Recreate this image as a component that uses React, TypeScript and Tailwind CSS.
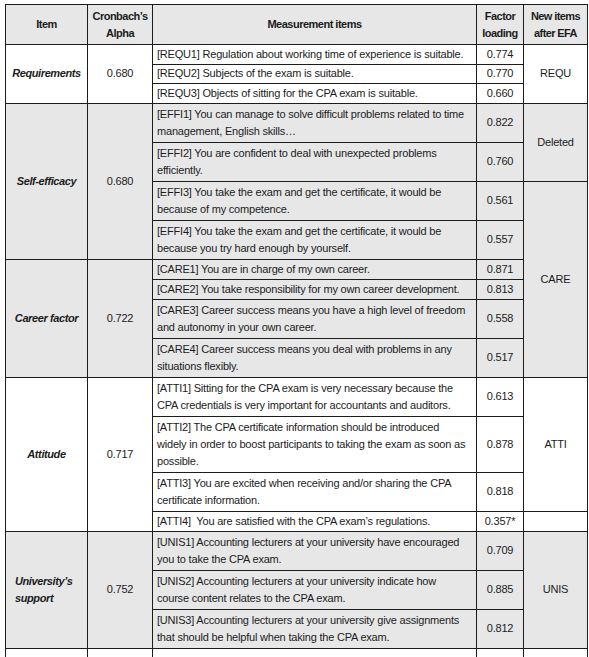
import React from "react";

const GRAY = "bg-[#e7e7e8]";
const td = "border border-[#1c1c1c] align-middle";
const meas = `${td} px-[4px] text-left whitespace-nowrap`;
const num = `${td} text-center`;
const lbl = `${td} text-center font-bold italic tracking-[-0.4px]`;

type Row = {
  h: string;
  text: React.ReactNode;
  f: string;
};

function M({ lines }: { lines: string[] }) {
  return (
    <>
      {lines.map((l, i) => (
        <React.Fragment key={i}>
          {i > 0 && <br />}
          {l}
        </React.Fragment>
      ))}
    </>
  );
}

export default function App() {
  return (
    <div className="w-[589px] h-[657px] overflow-hidden bg-white pt-[4px] pl-[5px]">
      <table
        className="w-[582px] table-fixed border-collapse text-[11px] leading-[17px] text-[#1c1c1c] tracking-[-0.2px]"
        style={{ fontFamily: '"Liberation Sans", Arial, sans-serif' }}
      >
        <colgroup>
          <col className="w-[82px]" />
          <col className="w-[65px]" />
          <col className="w-[324px]" />
          <col className="w-[47px]" />
          <col className="w-[64px]" />
        </colgroup>
        <thead>
          <tr className={`h-[40px] ${GRAY}`}>
            <th className={`${td} text-center font-bold tracking-[-0.5px]`}>Item</th>
            <th className={`${td} text-center font-bold tracking-[-0.5px]`}>
              Cronbach’s
              <br />
              Alpha
            </th>
            <th className={`${td} text-center font-bold tracking-[-0.5px]`}>Measurement items</th>
            <th className={`${td} text-center font-bold tracking-[-0.5px]`}>
              Factor
              <br />
              loading
            </th>
            <th className={`${td} text-center font-bold tracking-[-0.6px]`}>
              New items
              <br />
              after EFA
            </th>
          </tr>
        </thead>
        <tbody>
          {/* Requirements */}
          <tr className="h-[19.5px] bg-white">
            <td rowSpan={3} className={lbl}>Requirements</td>
            <td rowSpan={3} className={num}>0.680</td>
            <td className={meas}>[REQU1] Regulation about working time of experience is suitable.</td>
            <td className={num}>0.774</td>
            <td rowSpan={3} className={num}>REQU</td>
          </tr>
          <tr className="h-[19.5px] bg-white">
            <td className={meas}>[REQU2] Subjects of the exam is suitable.</td>
            <td className={num}>0.770</td>
          </tr>
          <tr className="h-[19.5px] bg-white">
            <td className={meas}>[REQU3] Objects of sitting for the CPA exam is suitable.</td>
            <td className={num}>0.660</td>
          </tr>

          {/* Self-efficacy */}
          <tr className={`h-[39px] ${GRAY}`}>
            <td rowSpan={4} className={lbl}>Self-efficacy</td>
            <td rowSpan={4} className={num}>0.680</td>
            <td className={meas}>
              <M lines={["[EFFI1] You can manage to solve difficult problems related to time", "management, English skills…"]} />
            </td>
            <td className={num}>0.822</td>
            <td rowSpan={2} className={num}>Deleted</td>
          </tr>
          <tr className={`h-[39px] ${GRAY}`}>
            <td className={meas}>
              <M lines={["[EFFI2] You are confident to deal with unexpected problems", "efficiently."]} />
            </td>
            <td className={num}>0.760</td>
          </tr>
          <tr className={`h-[39px] ${GRAY}`}>
            <td className={meas}>
              <M lines={["[EFFI3] You take the exam and get the certificate, it would be", "because of my competence."]} />
            </td>
            <td className={num}>0.561</td>
            <td rowSpan={6} className={num}>CARE</td>
          </tr>
          <tr className={`h-[39px] ${GRAY}`}>
            <td className={meas}>
              <M lines={["[EFFI4] You take the exam and get the certificate, it would be", "because you try hard enough by yourself."]} />
            </td>
            <td className={num}>0.557</td>
          </tr>

          {/* Career factor */}
          <tr className={`h-[20px] ${GRAY}`}>
            <td rowSpan={4} className={lbl}>Career factor</td>
            <td rowSpan={4} className={num}>0.722</td>
            <td className={meas}>[CARE1] You are in charge of my own career.</td>
            <td className={num}>0.871</td>
          </tr>
          <tr className={`h-[20px] ${GRAY}`}>
            <td className={meas}>[CARE2] You take responsibility for my own career development.</td>
            <td className={num}>0.813</td>
          </tr>
          <tr className={`h-[39px] ${GRAY}`}>
            <td className={meas}>
              <M lines={["[CARE3] Career success means you have a high level of freedom", "and autonomy in your own career."]} />
            </td>
            <td className={num}>0.558</td>
          </tr>
          <tr className={`h-[39px] ${GRAY}`}>
            <td className={meas}>
              <M lines={["[CARE4] Career success means you deal with problems in any", "situations flexibly."]} />
            </td>
            <td className={num}>0.517</td>
          </tr>

          {/* Attitude */}
          <tr className="h-[39px] bg-white">
            <td rowSpan={4} className={lbl}>Attitude</td>
            <td rowSpan={4} className={num}>0.717</td>
            <td className={meas}>
              <M lines={["[ATTI1] Sitting for the CPA exam is very necessary because the", "CPA credentials is very important for accountants and auditors."]} />
            </td>
            <td className={num}>0.613</td>
            <td rowSpan={3} className={num}>ATTI</td>
          </tr>
          <tr className="h-[56px] bg-white">
            <td className={meas}>
              <M
                lines={[
                  "[ATTI2] The CPA certificate information should be introduced",
                  "widely in order to boost participants to taking the exam as soon as",
                  "possible.",
                ]}
              />
            </td>
            <td className={num}>0.878</td>
          </tr>
          <tr className="h-[39px] bg-white">
            <td className={meas}>
              <M lines={["[ATTI3] You are excited when receiving and/or sharing the CPA", "certificate information."]} />
            </td>
            <td className={num}>0.818</td>
          </tr>
          <tr className="h-[20px] bg-white">
            <td className={`${meas} whitespace-pre`}>[ATTI4]  You are satisfied with the CPA exam’s regulations.</td>
            <td className={num}>0.357*</td>
            <td className={num}></td>
          </tr>

          {/* University's support */}
          <tr className={`h-[39px] ${GRAY}`}>
            <td rowSpan={3} className={lbl}>
              <div className="text-left pl-[9px]">
                University’s
                <br />
                support
              </div>
            </td>
            <td rowSpan={3} className={num}>0.752</td>
            <td className={meas}>
              <M lines={["[UNIS1] Accounting lecturers at your university have encouraged", "you to take the CPA exam."]} />
            </td>
            <td className={num}>0.709</td>
            <td rowSpan={3} className={num}>UNIS</td>
          </tr>
          <tr className={`h-[39px] ${GRAY}`}>
            <td className={meas}>
              <M lines={["[UNIS2] Accounting lecturers at your university indicate how", "course content relates to the CPA exam."]} />
            </td>
            <td className={num}>0.885</td>
          </tr>
          <tr className={`h-[39px] ${GRAY}`}>
            <td className={meas}>
              <M lines={["[UNIS3] Accounting lecturers at your university give assignments", "that should be helpful when taking the CPA exam."]} />
            </td>
            <td className={num}>0.812</td>
          </tr>
          <tr className="h-[39px] bg-white">
            <td className={td}></td>
            <td className={td}></td>
            <td className={meas}></td>
            <td className={td}></td>
            <td className={td}></td>
          </tr>
        </tbody>
      </table>
    </div>
  );
}
